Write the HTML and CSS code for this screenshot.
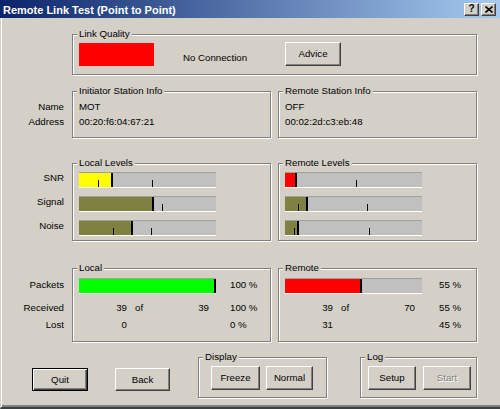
FILE: index.html
```html
<!DOCTYPE html>
<html>
<head>
<meta charset="utf-8">
<title>Remote Link Test (Point to Point)</title>
<link rel="stylesheet" href="styles.css">
</head>
<body>
<div class="window">
  <div class="titlebar">
    <span class="title">Remote Link Test (Point to Point)</span>
    <span class="tbtn help">?</span>
    <span class="tbtn close"><svg width="8" height="7" viewBox="0 0 8 7"><path d="M0.5 0.5 L7.5 6.5 M7.5 0.5 L0.5 6.5" stroke="#000" stroke-width="1.6"/></svg></span>
  </div>
  <div class="client">
    <div class="row r1">
      <div class="labels"></div>
      <div class="group wide h41">
        <div class="cap">Link Quality</div>
        <div class="lq">
          <div class="lamp"></div>
          <div class="status">No Connection</div>
          <button class="btn advice">Advice</button>
        </div>
      </div>
    </div>

    <div class="row r2">
      <div class="labels info-labels">
        <div>Name</div>
        <div>Address</div>
      </div>
      <div class="group h47">
        <div class="cap">Initiator Station Info</div>
        <div class="info">
          <div>MOT</div>
          <div>00:20:f6:04:67:21</div>
        </div>
      </div>
      <div class="group h47">
        <div class="cap">Remote Station Info</div>
        <div class="info">
          <div>OFF</div>
          <div>00:02:2d:c3:eb:48</div>
        </div>
      </div>
    </div>

    <div class="row r3">
      <div class="labels level-labels">
        <div>SNR</div>
        <div>Signal</div>
        <div>Noise</div>
      </div>
      <div class="group h78">
        <div class="cap">Local Levels</div>
        <div class="bars">
          <div class="bar"><div class="fill yellow" style="width:34px"></div><i class="tick" style="left:19px"></i><i class="tick" style="left:73px"></i></div>
          <div class="bar"><div class="fill olive" style="width:75px"></div><i class="tick" style="left:83px"></i></div>
          <div class="bar"><div class="fill olive" style="width:54px"></div><i class="tick" style="left:34px"></i><i class="tick" style="left:72px"></i></div>
        </div>
      </div>
      <div class="group h78">
        <div class="cap">Remote Levels</div>
        <div class="bars">
          <div class="bar"><div class="fill red" style="width:12px"></div><i class="tick" style="left:71px"></i></div>
          <div class="bar"><div class="fill olive" style="width:23px"></div><i class="tick" style="left:13px"></i><i class="tick" style="left:82px"></i></div>
          <div class="bar"><div class="fill olive" style="width:14px"></div><i class="tick" style="left:9px"></i><i class="tick" style="left:84px"></i></div>
        </div>
      </div>
    </div>

    <div class="row r4">
      <div class="labels stat-labels">
        <div class="l-packets">Packets</div>
        <div class="l-received">Received</div>
        <div class="l-lost">Lost</div>
      </div>
      <div class="group h74">
        <div class="cap">Local</div>
        <div class="stats">
          <div class="bar wide-bar"><div class="fill green" style="width:137px"></div></div>
          <div class="pct">100 %</div>
          <div class="n1">39</div><div class="of">of</div><div class="n2">39</div><div class="pct">100 %</div>
          <div class="n1">0</div><div class="pct">0 %</div>
        </div>
      </div>
      <div class="group h74">
        <div class="cap">Remote</div>
        <div class="stats remote">
          <div class="bar wide-bar"><div class="fill red" style="width:77px"></div></div>
          <div class="pct">55 %</div>
          <div class="n1">39</div><div class="of">of</div><div class="n2">70</div><div class="pct">55 %</div>
          <div class="n1">31</div><div class="pct">45 %</div>
        </div>
      </div>
    </div>

    <div class="bottom">
      <button class="btn default quit">Quit</button>
      <button class="btn back">Back</button>
      <div class="group display h41">
        <div class="cap">Display</div>
        <div class="btns display-btns">
          <button class="btn freeze">Freeze</button>
          <button class="btn normal">Normal</button>
        </div>
      </div>
      <div class="group log h41">
        <div class="cap">Log</div>
        <div class="btns log-btns">
          <button class="btn w48">Setup</button>
          <button class="btn w48 disabled">Start</button>
        </div>
      </div>
    </div>
  </div>
</div>
</body>
</html>
```
FILE: styles.css
```css
html, body {
  margin: 0;
  padding: 0;
}
body {
  font-family: "Liberation Sans", Arial, sans-serif;
  font-size: 9.7px;
  color: #000;
  background: #d4d0c8;
}
.window {
  width: 500px;
  height: 409px;
  background: #d4d0c8;
  display: flex;
  flex-direction: column;
  overflow: hidden;
}
.titlebar {
  height: 18px;
  flex: none;
  background: linear-gradient(to right, #0a246a, #a6caf0);
  display: flex;
  align-items: center;
  padding: 0 4px 0 3px;
  color: #fff;
  font-weight: bold;
  font-size: 11px;
}
.title {
  flex: 1;
  padding-top: 1px;
  white-space: nowrap;
}
.tbtn {
  width: 15px;
  height: 13px;
  box-sizing: border-box;
  background: #d4d0c8;
  border: 1px solid;
  border-color: #fff #404040 #404040 #fff;
  box-shadow: inset -1px -1px 0 #808080;
  color: #000;
  font-size: 10px;
  font-weight: bold;
  display: flex;
  align-items: center;
  justify-content: center;
  line-height: 10px;
}
.help {
  margin-right: 2px;
}
.client {
  flex: 1;
  border-left: 1px solid #d4d0c8;
  border-bottom: 2px solid #404040;
  box-shadow: inset 1px 0 0 #fff, inset 0 -2px 0 #808080;
  padding-top: 16px;
}
.row {
  display: grid;
  grid-template-columns: 64px 199px 199px;
  column-gap: 7px;
  align-items: start;
}
.r2 { margin-top: 16px; }
.r3 { margin-top: 25px; }
.r4 { margin-top: 27px; }
.wide {
  grid-column: 2 / 4;
}
.labels {
  text-align: right;
  padding-right: 1px;
  white-space: nowrap;
}
.info-labels {
  padding-top: 8px;
  line-height: 15px;
}
.level-labels {
  padding-top: 7px;
  display: flex;
  flex-direction: column;
  gap: 8px;
  line-height: 16px;
}
.stat-labels {
  padding-top: 10px;
  line-height: 14px;
}
.l-received { margin-top: 9px; }
.l-lost { margin-top: 3px; }

.group {
  box-sizing: border-box;
  border: 1px solid #808080;
  box-shadow: inset 1px 1px 0 #fff, 1px 1px 0 #fff;
}
.h41 { height: 41px; }
.h47 { height: 47px; }
.h74 { height: 74px; }
.h78 { height: 78px; }
.cap {
  display: table;
  margin: -7px 0 0 4px;
  padding: 0 2px;
  background: #d4d0c8;
  line-height: 12px;
  white-space: nowrap;
}
.lq {
  display: flex;
  align-items: flex-start;
  padding: 2px 0 0 6px;
}
.lamp {
  width: 75px;
  height: 23px;
  margin-top: 1px;
  background: #ff0000;
}
.status {
  width: 102px;
  margin: 10px 0 0 29px;
  line-height: 12px;
  white-space: nowrap;
}
.info {
  padding: 2px 0 0 6px;
  line-height: 15px;
}
.bars {
  padding: 3px 0 0 6px;
  display: flex;
  flex-direction: column;
  gap: 8px;
}
.bar {
  position: relative;
  width: 137px;
  height: 16px;
  box-sizing: border-box;
  background: #c0c0c0;
  border-top: 1px solid #a0a0a0;
  border-bottom: 1px solid #fff;
  display: flex;
}
.fill {
  height: 100%;
  box-sizing: border-box;
  border-right: 2px solid #000;
}
.yellow { background: #ffff00; }
.olive { background: #808040; }
.red { background: #ff0000; }
.green { background: #00ff00; }
.tick {
  position: absolute;
  bottom: 0;
  width: 1px;
  height: 7px;
  background: #000;
}
.stats {
  display: grid;
  grid-template-columns: 48px 8px 20px 54px 21px auto;
  grid-template-rows: 23px 17px 14px;
  align-items: start;
  padding: 4px 0 0 6px;
  line-height: 14px;
  white-space: nowrap;
}
.stats.remote {
  grid-template-columns: 48px 8px 20px 54px 24px auto;
}
.wide-bar {
  grid-column: 1 / 6;
}
.pct {
  grid-column: 6;
}
.n1 {
  grid-column: 1;
  text-align: right;
}
.of {
  grid-column: 3;
}
.n2 {
  grid-column: 4;
  text-align: right;
}

.bottom {
  display: flex;
  align-items: flex-start;
  padding-left: 31px;
  margin-top: 15px;
}
.btn {
  font-family: "Liberation Sans", Arial, sans-serif;
  font-size: 9.7px;
  color: #000;
  background: #d4d0c8;
  box-sizing: border-box;
  height: 23px;
  padding: 0;
  margin: 0;
  border: 1px solid;
  border-color: #fff #404040 #404040 #fff;
  box-shadow: inset -1px -1px 0 #808080;
  border-radius: 0;
  line-height: 12px;
}
.btn.default {
  border: 1px solid #000;
  box-shadow: inset 1px 1px 0 #fff, inset -1px -1px 0 #404040, inset -2px -2px 0 #808080;
}
.advice {
  width: 56px;
  height: 24px;
}
.quit {
  width: 56px;
  margin-top: 11px;
}
.back {
  width: 55px;
  margin: 11px 0 0 27px;
}
.display {
  width: 129px;
  margin-left: 28px;
}
.log {
  width: 117px;
  margin-left: 33px;
}
.btns {
  display: flex;
  padding-top: 3px;
}
.display-btns {
  gap: 6px;
  padding-left: 12px;
}
.log-btns {
  gap: 7px;
  padding-left: 7px;
}
.freeze { width: 49px; height: 24px; }
.normal { width: 47px; height: 24px; }
.w48 { width: 48px; height: 24px; }
.disabled {
  color: #808080;
  text-shadow: 1px 1px 0 #fff;
}
```
